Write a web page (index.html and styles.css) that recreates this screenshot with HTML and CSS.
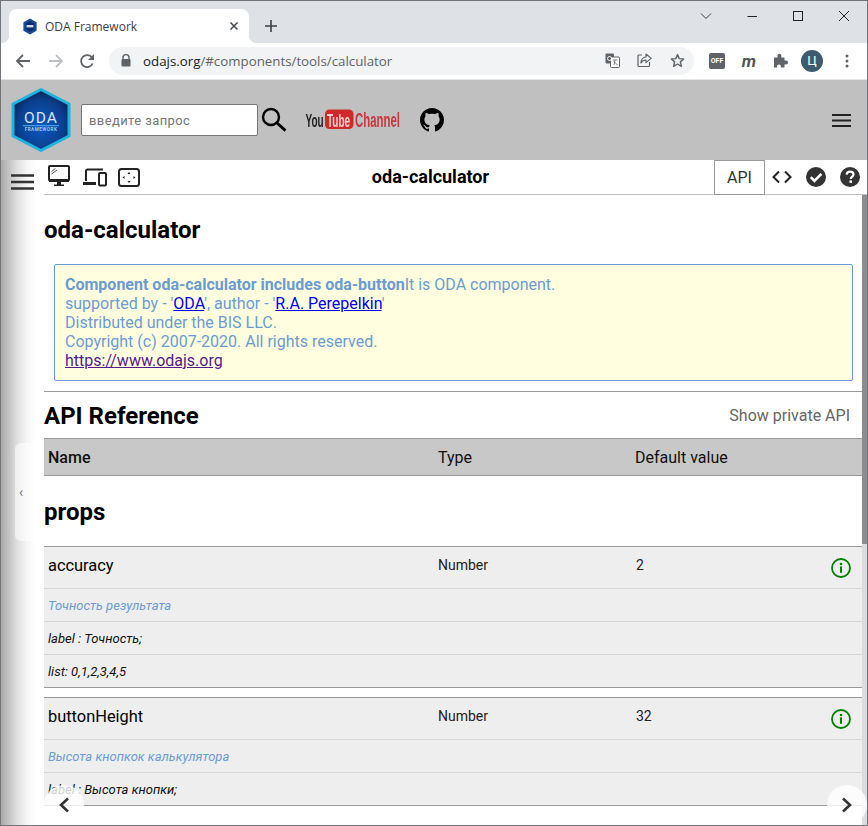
FILE: index.html
```html
<!DOCTYPE html>
<html lang="en">
<head>
    <meta charset="UTF-8">
    <title>ODA Framework</title>
    <link rel="stylesheet" href="styles.css">
</head>
<body>
<div class="window">
    <div class="tabstrip">
        <div class="tab">
            <svg class="favicon" width="16" height="17" viewBox="0 0 16 17"><path d="M8 0.5 14.6 4.3V12.7L8 16.5 1.4 12.7V4.3Z" fill="#1b4a96"/><path d="M8 3 12.4 5.6V11.4L8 14 3.6 11.4V5.6Z" fill="#0f2f6c"/><rect x="4.6" y="7" width="6.8" height="2.4" fill="#c9d8ee"/></svg>
            <span class="tab-title">ODA Framework</span>
            <svg class="tab-close" width="10" height="10" viewBox="0 0 10 10"><path d="M1.5 1.5 8.5 8.5M8.5 1.5 1.5 8.5" stroke="#45484c" stroke-width="1.5"/></svg>
        </div>
        <svg class="new-tab" width="14" height="14" viewBox="0 0 14 14"><path d="M7 1V13M1 7H13" stroke="#3c4043" stroke-width="1.6"/></svg>
        <div class="win-controls">
            <svg width="12" height="8" viewBox="0 0 12 8"><path d="M1 1.5 6 6.5 11 1.5" fill="none" stroke="#3c4043" stroke-width="1"/></svg>
            <svg width="12" height="12" viewBox="0 0 12 12"><path d="M1.5 6.5H11" stroke="#222" stroke-width="1"/></svg>
            <svg width="12" height="12" viewBox="0 0 12 12"><rect x="1.5" y="1.5" width="9" height="9" fill="none" stroke="#222" stroke-width="1"/></svg>
            <svg width="12" height="12" viewBox="0 0 12 12"><path d="M1 1 11 11M11 1 1 11" stroke="#222" stroke-width="1"/></svg>
        </div>
    </div>

    <div class="browserbar">
        <svg class="nav-back" width="16" height="16" viewBox="0 0 16 16"><path d="M15 8H2M8 2 2 8 8 14" fill="none" stroke="#5f6368" stroke-width="1.8"/></svg>
        <svg class="nav-fwd" width="16" height="16" viewBox="0 0 16 16"><path d="M1 8H14M8 2 14 8 8 14" fill="none" stroke="#bdc1c6" stroke-width="1.8"/></svg>
        <svg class="nav-reload" width="16" height="16" viewBox="0 0 16 16"><path d="M13.6 10.5A6 6 0 1 1 13 4.6" fill="none" stroke="#5f6368" stroke-width="1.8"/><path d="M15 1V7H9Z" fill="#5f6368"/></svg>
        <div class="omnibox">
            <svg class="lock" width="10" height="13" viewBox="0 0 10 13"><path d="M2 5V3.6A3 3 0 0 1 8 3.6V5" fill="none" stroke="#5f6368" stroke-width="1.4"/><rect x="0.5" y="5" width="9" height="7.5" rx="1" fill="#5f6368"/></svg>
            <span class="url">odajs.org<span class="url-path">/#components/tools/calculator</span></span>
            <svg class="omni-translate" width="15" height="15" viewBox="0 0 15 15"><rect x="0.5" y="0.5" width="8.5" height="10" rx="1" fill="#5f6368"/><rect x="5.5" y="4" width="9" height="10.5" rx="1" fill="#fff" stroke="#5f6368"/><path d="M8 7H12.5M10 7 9 12M9 8.5 12.5 12" fill="none" stroke="#5f6368" stroke-width=".8"/><circle cx="4.5" cy="5.5" r="2" fill="none" stroke="#fff" stroke-width=".9"/></svg>
            <svg class="omni-share" width="15" height="15" viewBox="0 0 15 15"><path d="M5 2H2A1 1 0 0 0 1 3V12.5A1 1 0 0 0 2 13.5H11.5A1 1 0 0 0 12.5 12.5V9" fill="none" stroke="#5f6368" stroke-width="1.2"/><path d="M9 1 14.2 5.4 9 9.6V7C6.8 7 5 8 4 10 4 6.8 6 4.2 9 4Z" fill="none" stroke="#5f6368" stroke-width="1.2" stroke-linejoin="round"/></svg>
            <svg class="omni-star" width="15" height="15" viewBox="0 0 15 15"><path d="M7.5 1.6 9.3 5.6 13.7 6 10.4 8.9 11.4 13.3 7.5 11 3.6 13.3 4.6 8.9 1.3 6 5.7 5.6Z" fill="none" stroke="#5f6368" stroke-width="1.4" stroke-linejoin="round"/></svg>
        </div>
        <div class="ext-off">OFF</div>
        <div class="ext-m">m</div>
        <svg class="ext-puzzle" width="15" height="15" viewBox="0 0 15 15"><path d="M1 4.5H4.6C4 2.5 4.8 .8 6.4 .8S8.8 2.5 8.2 4.5H11.5V7.6C13.4 7 15 7.8 15 9.4S13.4 11.8 11.5 11.2V14.5H7.8C8.3 12.8 7.5 11.6 6 11.6S3.7 12.8 4.2 14.5H1Z" fill="#5f6368"/></svg>
        <div class="avatar">Ц</div>
        <svg class="chrome-menu" width="4" height="14" viewBox="0 0 4 14"><circle cx="2" cy="2" r="1.5" fill="#5f6368"/><circle cx="2" cy="7" r="1.5" fill="#5f6368"/><circle cx="2" cy="12" r="1.5" fill="#5f6368"/></svg>
    </div>

    <header class="site-header">
        <svg class="logo" width="60" height="66" viewBox="0 0 60 66">
            <defs>
                <radialGradient id="logoFill" cx="50%" cy="58%" r="58%"><stop offset="0" stop-color="#0a5cc4"/><stop offset=".7" stop-color="#0b3f8e"/><stop offset="1" stop-color="#0a2458"/></radialGradient>
            </defs>
            <path d="M30 2.5 58 17V49L30 63.5 2 49V17Z" fill="url(#logoFill)" stroke="#1fb4dc" stroke-width="3" stroke-linejoin="round"/>
            <text x="30" y="36" class="logo-oda" text-anchor="middle">ODA</text>
            <rect x="12" y="38" width="36" height="1.2" fill="#3fa0e6"/>
            <text x="30" y="44" class="logo-sub" text-anchor="middle">FRAMEWORK</text>
        </svg>
        <input class="search-input" type="text" placeholder="введите запрос">
        <svg class="search-icon" width="26" height="26" viewBox="0 0 26 26"><circle cx="10" cy="10" r="8" fill="none" stroke="#000" stroke-width="2.4"/><path d="M15.8 15.8 24.5 23.6" stroke="#000" stroke-width="2.8"/></svg>
        <svg class="youtube" width="96" height="24" viewBox="0 0 96 24">
            <rect x="20" y="1.5" width="28.5" height="19.5" rx="4.5" fill="#cf2a2a"/>
            <text transform="translate(0.5 18.5) scale(1 1.8)" class="yt-you">You</text>
            <text transform="translate(22 18.5) scale(1 1.8)" class="yt-tube">Tube</text>
            <text transform="translate(50 18.5) scale(1 1.7)" class="yt-channel">Channel</text>
        </svg>
        <svg class="github" width="24" height="24" viewBox="0 0 16 16"><path d="M8 0C3.58 0 0 3.58 0 8c0 3.54 2.29 6.53 5.47 7.59.4.07.55-.17.55-.38 0-.19-.01-.82-.01-1.49-2.01.37-2.53-.49-2.69-.94-.09-.23-.48-.94-.82-1.13-.28-.15-.68-.52-.01-.53.63-.01 1.08.58 1.23.82.72 1.21 1.87.87 2.33.66.07-.52.28-.87.51-1.07-1.78-.2-3.64-.89-3.64-3.95 0-.87.31-1.59.82-2.15-.08-.2-.36-1.02.08-2.12 0 0 .67-.21 2.2.82.64-.18 1.32-.27 2-.27.68 0 1.36.09 2 .27 1.53-1.04 2.2-.82 2.2-.82.44 1.1.16 1.92.08 2.12.51.56.82 1.27.82 2.15 0 3.07-1.87 3.75-3.65 3.95.29.25.54.73.54 1.48 0 1.07-.01 1.93-.01 2.2 0 .21.15.46.55.38A8.013 8.013 0 0016 8c0-4.42-3.58-8-8-8z" fill="#000"/></svg>
        <svg class="header-menu" width="19" height="13" viewBox="0 0 19 13"><path d="M0 1H19M0 6.5H19M0 12H19" stroke="#222" stroke-width="2"/></svg>
    </header>

    <div class="main">
        <aside class="sidebar">
            <svg class="side-menu" width="23" height="16" viewBox="0 0 23 16"><path d="M0 1.5H23M0 8H23M0 14.5H23" stroke="#333" stroke-width="2.4"/></svg>
            <div class="side-handle">‹</div>
        </aside>

        <div class="content">
            <div class="content-bar">
                <svg class="bar-monitor" width="22" height="22" viewBox="0 0 22 22"><rect x="1" y="1" width="20" height="14.5" rx="1" fill="#fff" stroke="#222" stroke-width="2"/><path d="M3.5 6.5 7.5 3.5M3.5 9 9 5" stroke="#555" stroke-width="1"/><path d="M1 14H21V17H1ZM9 17H13V19.5H9ZM6 19.5H16V21H6Z" fill="#222"/></svg>
                <svg class="bar-devices" width="24" height="19" viewBox="0 0 24 19"><path d="M3 13V3A1.5 1.5 0 0 1 4.5 1.5H20" fill="none" stroke="#222" stroke-width="2"/><path d="M0 14H13V17H0Z" fill="#222"/><rect x="16" y="5" width="7" height="12.5" rx="1" fill="none" stroke="#222" stroke-width="2"/></svg>
                <svg class="bar-full" width="22" height="19" viewBox="0 0 22 19"><rect x="1" y="1" width="20" height="17" rx="2.5" fill="none" stroke="#222" stroke-width="2"/><path d="M11 4 12.5 6H9.5ZM11 15 12.5 13H9.5ZM4.5 9.5 6.5 8V11ZM17.5 9.5 15.5 8V11Z" fill="#222"/></svg>
                <div class="bar-title">oda-calculator</div>
                <div class="bar-api">API</div>
                <svg class="bar-code" width="20" height="14" viewBox="0 0 20 14"><path d="M7 1.5 1.5 7 7 12.5M13 1.5 18.5 7 13 12.5" fill="none" stroke="#222" stroke-width="2"/></svg>
                <svg class="bar-check" width="20" height="20" viewBox="0 0 20 20"><circle cx="10" cy="10" r="10" fill="#333"/><path d="M4.8 10.2 8.4 13.8 15.4 6.8" fill="none" stroke="#fff" stroke-width="2.6"/></svg>
                <svg class="bar-help" width="20" height="20" viewBox="0 0 20 20"><circle cx="10" cy="10" r="10" fill="#333"/><path d="M6.6 7.6C6.8 5.6 8.2 4.6 10.1 4.6 12.1 4.6 13.5 5.8 13.5 7.4 13.5 9.6 10.8 9.6 10.8 12" fill="none" stroke="#fff" stroke-width="2.2"/><rect x="9.5" y="13.4" width="2.5" height="2.5" fill="#fff"/></svg>
            </div>

            <div class="scroll-area">
                <div class="page">
                    <h1 class="page-title">oda-calculator</h1>
                    <div class="info">
                        <b>Component oda-calculator includes oda-button</b>It is ODA component.<br>
                        supported by - '<a href="#">ODA</a>', author - '<a href="#">R.A. Perepelkin</a>'<br>
                        Distributed under the BIS LLC.<br>
                        Copyright (c) 2007-2020. All rights reserved.<br>
                        <a href="#" class="visited">https://www.odajs.org</a>
                    </div>
                    <div class="api-head">
                        <h2>API Reference</h2>
                        <span class="show-private">Show private API</span>
                    </div>
                    <div class="table-head">
                        <span class="col-name">Name</span>
                        <span class="col-type">Type</span>
                        <span class="col-def">Default value</span>
                    </div>
                    <h2 class="props-title">props</h2>

                    <div class="prop">
                        <div class="prop-main">
                            <span class="col-name prop-name">accuracy</span>
                            <span class="col-type">Number</span>
                            <span class="col-def">2</span>
                            <svg class="prop-info" width="20" height="20" viewBox="0 0 20 20"><circle cx="10" cy="10" r="9" fill="none" stroke="#008000" stroke-width="1.8"/><circle cx="10" cy="6" r="1.3" fill="#008000"/><rect x="9" y="8.4" width="2" height="6.4" fill="#008000"/></svg>
                        </div>
                        <div class="prop-row prop-desc">Точность результата</div>
                        <div class="prop-row">label : Точность;</div>
                        <div class="prop-row">list: 0,1,2,3,4,5</div>
                    </div>

                    <div class="prop">
                        <div class="prop-main">
                            <span class="col-name prop-name">buttonHeight</span>
                            <span class="col-type">Number</span>
                            <span class="col-def">32</span>
                            <svg class="prop-info" width="20" height="20" viewBox="0 0 20 20"><circle cx="10" cy="10" r="9" fill="none" stroke="#008000" stroke-width="1.8"/><circle cx="10" cy="6" r="1.3" fill="#008000"/><rect x="9" y="8.4" width="2" height="6.4" fill="#008000"/></svg>
                        </div>
                        <div class="prop-row prop-desc">Высота кнопкок калькулятора</div>
                        <div class="prop-row">label : Высота кнопки;</div>
                    </div>
                </div>
                <div class="scrollbar"><div class="scrollbar-thumb"></div></div>
            </div>

            <div class="page-btn page-prev"><svg width="12" height="16" viewBox="0 0 12 16"><path d="M10 1.5 3 8 10 14.5" fill="none" stroke="#333" stroke-width="2.6"/></svg></div>
            <div class="page-btn page-next"><svg width="12" height="16" viewBox="0 0 12 16"><path d="M2 1.5 9 8 2 14.5" fill="none" stroke="#333" stroke-width="2.6"/></svg></div>
        </div>
    </div>
</div>
</body>
</html>
```

FILE: styles.css
```css
* {
    box-sizing: border-box;
}

body {
    margin: 0;
    font-family: Roboto, Arial, sans-serif;
    background: #fff;
}

svg {
    display: block;
    flex: none;
}

.window {
    width: 868px;
    height: 826px;
    border: 1px solid #72767a;
    display: flex;
    flex-direction: column;
    overflow: hidden;
}

/* browser chrome */
.tabstrip {
    height: 42px;
    flex: none;
    background: #dee1e6;
    display: flex;
    align-items: flex-start;
    padding: 8px 0 0 8px;
}

.tab {
    width: 240px;
    height: 34px;
    background: #fff;
    border-radius: 8px 8px 0 0;
    display: flex;
    align-items: center;
    padding-left: 13px;
    position: relative;
}

.tab::after {
    content: "";
    position: absolute;
    right: -8px;
    bottom: 0;
    width: 8px;
    height: 8px;
    background: radial-gradient(circle at 100% 0, transparent 8px, #fff 8.5px);
}

.tab::before {
    content: "";
    position: absolute;
    left: -8px;
    bottom: 0;
    width: 8px;
    height: 8px;
    background: radial-gradient(circle at 0 0, transparent 8px, #fff 8.5px);
}

.favicon {
    margin-right: 7px;
}

.tab-title {
    font-family: "Open Sans", sans-serif;
    font-size: 12px;
    color: #3c4043;
    width: 184px;
    white-space: nowrap;
}

.new-tab {
    margin: 10px 0 0 15px;
}

.win-controls {
    margin-left: auto;
    margin-top: 0;
    display: flex;
    align-items: center;
    height: 14px;
    padding-right: 17px;
    gap: 34px;
}

.browserbar {
    height: 37px;
    flex: none;
    background: #fff;
    display: flex;
    align-items: center;
    padding-left: 14px;
    padding-bottom: 1px;
    border-bottom: 1px solid #e4e6e8;
}

.nav-fwd {
    margin-left: 17px;
}

.nav-reload {
    margin-left: 15px;
}

.omnibox {
    width: 585px;
    height: 28px;
    margin-left: 14px;
    background: #f1f3f4;
    border-radius: 14px;
    display: flex;
    align-items: center;
    padding-left: 12px;
}

.url {
    font-family: "Open Sans", sans-serif;
    font-size: 13.3px;
    color: #202124;
    margin-left: 12px;
    width: 462px;
    white-space: nowrap;
}

.url-path {
    color: #5f6368;
}

.omni-share {
    margin-left: 17px;
}

.omni-star {
    margin-left: 18px;
}

.ext-off {
    width: 16px;
    height: 16px;
    margin-left: 15px;
    background: #5f6368;
    border-radius: 2px;
    color: #fff;
    font-size: 7px;
    font-weight: 700;
    line-height: 16px;
    text-align: center;
}

.ext-m {
    width: 16px;
    margin-left: 16px;
    font-size: 17px;
    font-style: italic;
    font-weight: 700;
    color: #555;
    text-align: center;
    line-height: 16px;
}

.ext-puzzle {
    margin-left: 16px;
}

.avatar {
    width: 22px;
    height: 22px;
    margin-left: 13px;
    border-radius: 50%;
    background: #3e5b6e;
    color: #fff;
    font-size: 13px;
    line-height: 22px;
    text-align: center;
}

.chrome-menu {
    margin-left: 22px;
}

/* site header */
.site-header {
    height: 80px;
    flex: none;
    background: #c0c0c0;
    display: flex;
    align-items: center;
    padding-left: 10px;
}

.logo-oda {
    font-size: 15.5px;
    letter-spacing: 1px;
    fill: #d8e4f4;
}

.logo-sub {
    font-size: 4.6px;
    font-weight: 700;
    letter-spacing: .5px;
    fill: #a9c3e6;
}

.search-input {
    width: 177px;
    height: 32px;
    margin-left: 10px;
    padding: 0 7px;
    border: 1px solid #767676;
    border-radius: 2px;
    font-family: Roboto, sans-serif;
    font-size: 13px;
    letter-spacing: .4px;
    background: #fff;
}

.search-input::placeholder {
    color: #757575;
}

.search-icon {
    margin-left: 3px;
}

.youtube {
    margin-left: 18px;
    filter: blur(.3px);
}

.youtube text {
    font-family: "Liberation Sans", sans-serif;
    font-weight: 700;
}

.yt-you {
    font-size: 10px;
    fill: #222;
}

.yt-tube {
    font-size: 10px;
    fill: #f3d0d0;
}

.yt-channel {
    font-size: 11.4px;
    fill: #c8383f;
}

.github {
    margin-left: 19px;
}

.header-menu {
    margin-left: auto;
    margin-right: 16px;
}

/* main */
.main {
    flex: 1;
    min-height: 0;
    display: flex;
}

.sidebar {
    width: 43px;
    flex: none;
    background: linear-gradient(to right, #a8a8a8, #dcdcdc 35%, #f5f5f5 60%, #fff 80%);
    padding: 14px 0 0 10px;
    position: relative;
}

.side-handle {
    position: absolute;
    left: 14px;
    top: 283px;
    width: 29px;
    height: 98px;
    background: rgba(255, 255, 255, .55);
    border-radius: 6px 0 0 6px;
    color: #777;
    font-size: 14px;
    line-height: 98px;
    padding-left: 4px;
}

.content {
    flex: 1;
    min-width: 0;
    display: flex;
    flex-direction: column;
    position: relative;
}

.content-bar {
    height: 35px;
    flex: none;
    display: flex;
    align-items: center;
    border-bottom: 1px solid #bdbdbd;
    padding-left: 4px;
}

.bar-monitor {
    margin-bottom: 2px;
}

.bar-devices {
    margin-left: 13px;
}

.bar-full {
    margin-left: 11px;
}

.bar-title {
    width: 574px;
    padding: 0 0 2px 7px;
    text-align: center;
    font-size: 18px;
    font-weight: 700;
    color: #000;
}

.bar-api {
    width: 51px;
    height: 35px;
    border: 1px solid #999;
    font-size: 16px;
    line-height: 33px;
    text-align: center;
    color: #333;
}

.bar-code {
    margin-left: 7px;
}

.bar-check {
    margin-left: 14px;
}

.bar-help {
    margin-left: 14px;
}

.scroll-area {
    flex: 1;
    min-height: 0;
    display: flex;
}

.page {
    flex: 1;
    min-width: 0;
}

.scrollbar {
    width: 5px;
    flex: none;
    background: #dcdcdc;
}

.scrollbar-thumb {
    height: 349px;
    background: #8c8c8c;
}

.page-title {
    margin: 0;
    height: 69px;
    padding-top: 20px;
    font-size: 24px;
    line-height: 30px;
    font-weight: 700;
    color: #000;
}

.info {
    margin: 0 9px 0 10px;
    height: 117px;
    padding: 10px;
    background: #ffffe0;
    border: 1px solid #6a9bd8;
    border-radius: 2px;
    font-size: 16px;
    line-height: 19px;
    color: #6c9bd2;
}

.info a {
    color: #0000ee;
}

.info a.visited {
    color: #551a8b;
}

.api-head {
    margin-top: 10px;
    height: 47px;
    border-top: 1px solid #999;
    display: flex;
    align-items: center;
    justify-content: space-between;
    padding-right: 12px;
}

.api-head h2 {
    margin: 0;
    padding-top: 2px;
    font-size: 24px;
    font-weight: 700;
    color: #000;
}

.show-private {
    font-size: 16px;
    color: #666;
}

.table-head {
    height: 38px;
    background: #c8c8c8;
    border-top: 1px solid #999;
    border-bottom: 1px solid #999;
    display: flex;
    align-items: center;
    font-size: 16px;
    color: #111;
}

.table-head .col-name {
    font-weight: 500;
}

.col-name {
    width: 394px;
    padding-left: 4px;
}

.col-type {
    width: 197px;
}

.col-def {
    width: 196px;
}

.props-title {
    margin: 0;
    height: 70px;
    padding-top: 21px;
    font-size: 24px;
    line-height: 30px;
    font-weight: 700;
    color: #000;
}

.prop {
    margin-bottom: 9px;
    background: #eee;
    border-top: 1px solid #999;
    border-bottom: 1px solid #999;
}

.prop-main {
    height: 42px;
    display: flex;
    align-items: flex-start;
    padding-top: 10px;
    font-size: 14px;
    color: #222;
    border-bottom: 1px solid #d6d6d6;
}

.prop-main .col-def {
    padding-left: 1px;
}

.prop-name {
    font-size: 16.4px;
    line-height: 17px;
    font-weight: 400;
    color: #000;
}

.prop-info {
    margin-top: 1px;
}

.prop-row {
    height: 33px;
    padding-left: 4px;
    font-size: 13px;
    line-height: 33px;
    font-style: italic;
    color: #111;
    border-bottom: 1px solid #d6d6d6;
}

.prop-row:last-child {
    height: 32px;
    border-bottom: 0;
}

.prop-desc {
    color: #6c9bd2;
}

.page-btn {
    position: absolute;
    bottom: 0;
    width: 40px;
    height: 40px;
    border-radius: 50%;
    background: rgba(255, 255, 255, .8);
    display: flex;
    align-items: center;
    justify-content: center;
}

.page-prev {
    left: 0;
}

.page-next {
    right: 0;
}
```
